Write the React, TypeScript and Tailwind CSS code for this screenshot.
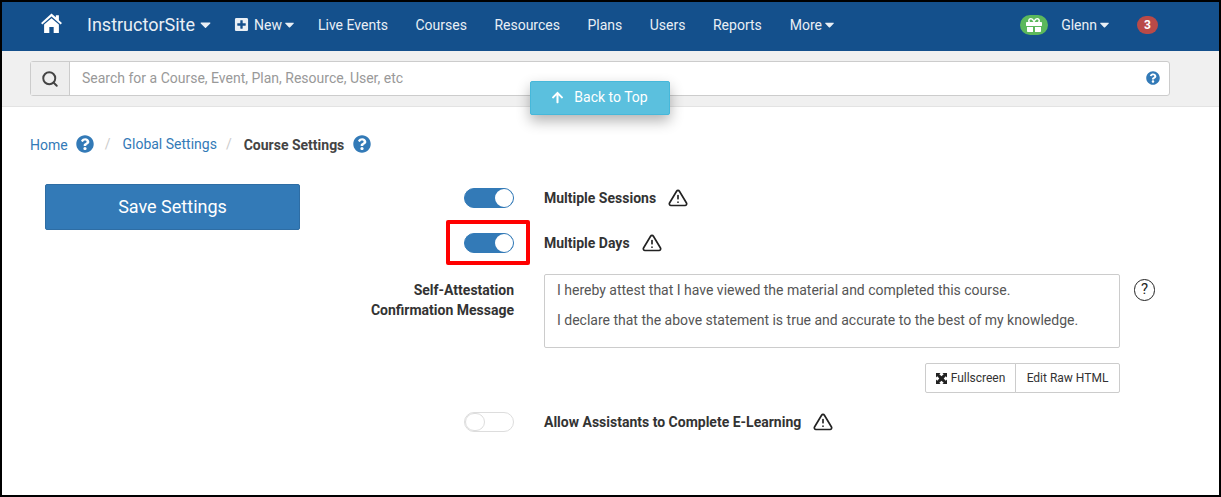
import { FaCaretDown, FaPlusSquare, FaGift, FaQuestionCircle, FaArrowUp } from 'react-icons/fa'
import { FiAlertTriangle, FiSearch } from 'react-icons/fi'

const NAV_LINKS = ['Live Events', 'Courses', 'Resources', 'Plans', 'Users', 'Reports']

function Toggle({ on }: { on: boolean }) {
  if (on) {
    return (
      <div className="flex h-5 w-[50px] justify-end rounded-full border border-[#337ab7] bg-[#337ab7]">
        <div className="h-[18px] w-[18px] rounded-full bg-white" />
      </div>
    )
  }
  return (
    <div className="h-5 w-[50px] rounded-full border border-[#ddd] bg-white">
      <div className="h-[18px] w-[20px] rounded-full border border-[#ddd] bg-white" />
    </div>
  )
}

function Warn() {
  return <FiAlertTriangle className="h-[20px] w-[20px] text-[#222]" strokeWidth={2} />
}

function HomeIcon() {
  return (
    <svg viewBox="0 0 24 23" className="ml-[39px] h-[20px] w-[21px] -translate-y-[2px]" fill="currentColor">
      <path d="M12 0.5 L17 5 V2.5 H20.5 V8.2 L24 11.5 L22.6 13.2 L12 4 L1.4 13.2 L0 11.5 Z" />
      <path d="M12 6 L20.5 13.3 V23 H14.5 V16 H9.5 V23 H3.5 V13.3 Z" />
    </svg>
  )
}

function FullscreenIcon() {
  return (
    <svg viewBox="0 0 12 12" className="h-[11px] w-[11px]" fill="#222">
      <path d="M0 0 H5 L3.6 1.4 L6 3.6 L8.4 1.4 L7 0 H12 V5 L10.6 3.6 L8.4 6 L10.6 8.4 L12 7 V12 H7 L8.4 10.6 L6 8.4 L3.6 10.6 L5 12 H0 V7 L1.4 8.4 L3.6 6 L1.4 3.6 L0 5 Z" />
    </svg>
  )
}

export default function App() {
  return (
    <div className="relative h-[497px] w-[1221px] overflow-hidden border-2 border-black bg-white font-['Roboto',sans-serif] text-sm text-[#333]">
      <nav className="flex h-[49px] items-center bg-[#14508c] pb-[4px] text-white">
        <HomeIcon />
        <span className="ml-[25px] flex items-center text-[18px] text-[#e9eff5]">
          InstructorSite
          <FaCaretDown className="ml-[2px] h-[17px] w-[17px]" />
        </span>
        <span className="ml-[20px] flex items-center text-[#e9eff5]">
          <FaPlusSquare className="mr-[5px] h-[15px] w-[15px]" />
          New
          <FaCaretDown className="h-[15px] w-[15px]" />
        </span>
        <div className="ml-[21px] flex gap-[27.5px] text-[#e9eff5]">
          {NAV_LINKS.map(l => (
            <span key={l}>{l}</span>
          ))}
        </div>
        <span className="ml-[28px] flex items-center text-[#e9eff5]">
          More
          <FaCaretDown className="h-[15px] w-[15px]" />
        </span>
        <div className="ml-auto mr-[61px] flex items-center">
          <span className="flex h-[20px] w-[28px] items-center justify-center rounded-full bg-[#5cb85c]">
            <FaGift className="h-[16px] w-[16px]" />
          </span>
          <span className="ml-[13px] flex items-center text-[#e9eff5]">
            Glenn
            <FaCaretDown className="h-[15px] w-[15px]" />
          </span>
          <span className="ml-[25px] flex h-[18px] w-[21px] items-center justify-center rounded-full bg-[#b94a48] text-xs font-bold">3</span>
        </div>
      </nav>

      <div className="h-[56px] border-b border-[#e3e3e3] bg-[#f0f0f0] px-[28px] pt-[10px]">
        <div className="flex h-[35px] w-[1140px] rounded-[3px] border border-[#ccc] bg-white">
          <div className="flex w-[39px] items-center justify-center border-r border-[#ccc] bg-[#eee]">
            <FiSearch className="h-[18px] w-[18px] text-[#444]" strokeWidth={2.6} />
          </div>
          <span className="flex flex-1 items-center pb-[2px] pl-3 text-[#999]">Search for a Course, Event, Plan, Resource, User, etc</span>
          <FaQuestionCircle className="mr-[9px] mt-[9px] h-[14px] w-[14px] text-[#337ab7]" />
        </div>
      </div>

      <div className="absolute left-[528px] top-[79px] flex h-[34px] w-[140px] items-center justify-center gap-[10px] rounded-[2px] border border-[#46b8da] bg-[#5bc0de] pb-[2px] pr-[1px] text-white shadow-[0_6px_14px_rgba(0,0,0,0.3)]">
        <FaArrowUp className="h-[13px] w-[13px]" />
        <span>Back to Top</span>
      </div>

      <div className="flex items-center px-[28px] pt-[27px]">
        <span className="translate-y-px text-[#337ab7]">Home</span>
        <FaQuestionCircle className="ml-[8px] h-[18px] w-[18px] text-[#337ab7]" />
        <span className="ml-[11px] text-[#ccc]">/</span>
        <span className="ml-[12px] text-[#337ab7]">Global Settings</span>
        <span className="ml-[9px] text-[#ccc]">/</span>
        <span className="ml-[12px] translate-y-px font-bold text-[#444]">Course Settings</span>
        <FaQuestionCircle className="ml-[9px] h-[18px] w-[18px] text-[#337ab7]" />
      </div>

      <div className="flex pt-[30px]">
        <div className="ml-[43px] flex h-[46px] w-[255px] items-center justify-center rounded-[2px] border border-[#2e6da4] bg-[#337ab7] text-[18px] text-white">
          Save Settings
        </div>

        <div className="ml-[164px] flex flex-col">
          <div className="mt-[4px] flex items-center">
            <Toggle on />
            <span className="ml-[30px] font-bold">Multiple Sessions</span>
            <span className="ml-[12px]"><Warn /></span>
          </div>

          <div className="mt-[25px] flex items-center">
            <div className="relative">
              <Toggle on />
              <div className="absolute -left-[18px] -top-[13px] h-[45px] w-[84px] rounded-[2px] border-[4px] border-[#ff0000]" />
            </div>
            <span className="ml-[30px] font-bold">Multiple Days</span>
            <span className="ml-[12px]"><Warn /></span>
          </div>

          <div className="mt-[21px] flex">
            <div className="ml-[-150px] w-[200px] pt-[6px] text-right font-bold leading-[20px]">
              Self-Attestation<br />Confirmation Message
            </div>
            <div className="ml-[30px]">
              <div className="h-[74px] w-[576px] rounded-[2px] border border-[#ccc] px-3 pt-[5px] text-[#555]">
                <p className="leading-[20px]">I hereby attest that I have viewed the material and completed this course.</p>
                <p className="mt-[10px] leading-[20px]">I declare that the above statement is true and accurate to the best of my knowledge.</p>
              </div>
              <div className="mt-[15px] flex justify-end text-xs text-[#333]">
                <span className="flex h-[30px] w-[91px] items-center justify-center gap-[4px] rounded-l-[2px] border border-[#ccc]">
                  <FullscreenIcon />
                  Fullscreen
                </span>
                <span className="-ml-px flex h-[30px] w-[105px] items-center justify-center rounded-r-[2px] border border-[#ccc]">Edit Raw HTML</span>
              </div>
            </div>
            <span className="ml-[14px] mt-[5px] flex h-[22px] w-[21px] items-center justify-center rounded-full border-[1.5px] border-[#222] text-[15px] text-[#222]">?</span>
          </div>

          <div className="mt-[19px] flex items-center">
            <Toggle on={false} />
            <span className="ml-[30px] font-bold">Allow Assistants to Complete E-Learning</span>
            <span className="ml-[12px]"><Warn /></span>
          </div>
        </div>
      </div>
    </div>
  )
}
